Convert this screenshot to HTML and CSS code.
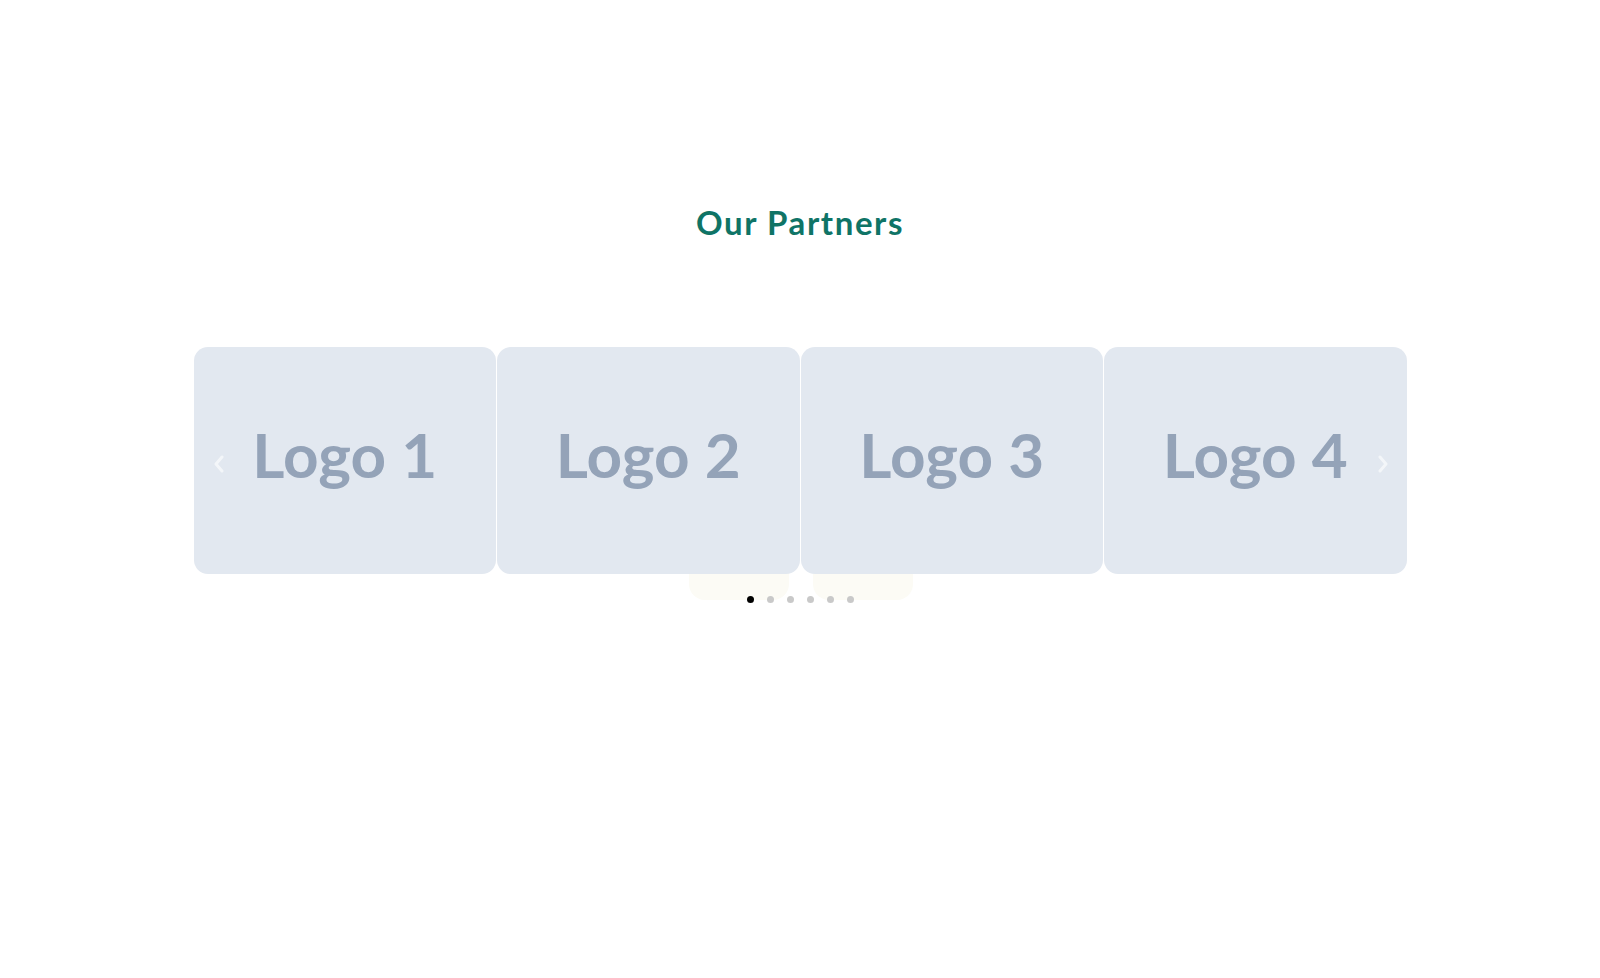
FILE: index.html
```html
<!DOCTYPE html>
<html lang="en">
<head>
  <meta charset="UTF-8">
  <title>Our Partners</title>
  <link rel="stylesheet" href="styles.css">
</head>
<body>

  <section class="partners">
    <h2 class="partners-title">Our Partners</h2>

    <div class="slider">
      <div class="slider-tabs">
        <span class="tab"></span>
        <span class="tab"></span>
      </div>

      <div class="slider-track">
        <div class="slide"><span>Logo 1</span></div>
        <div class="slide"><span>Logo 2</span></div>
        <div class="slide"><span>Logo 3</span></div>
        <div class="slide"><span>Logo 4</span></div>
      </div>

      <button class="slider-arrow prev" type="button" aria-label="Previous">
        <svg viewBox="0 0 10 20" width="10" height="20"><path d="M8 3 L2 10 L8 17" /></svg>
      </button>
      <button class="slider-arrow next" type="button" aria-label="Next">
        <svg viewBox="0 0 10 20" width="10" height="20"><path d="M2 3 L8 10 L2 17" /></svg>
      </button>

      <div class="slider-dots">
        <span class="dot active"></span>
        <span class="dot"></span>
        <span class="dot"></span>
        <span class="dot"></span>
        <span class="dot"></span>
        <span class="dot"></span>
      </div>
    </div>
  </section>

</body>
</html>
```

FILE: styles.css
```css
body {
  margin: 0;
  background: #ffffff;
  font-family: 'Lato', sans-serif;
}

.partners {
  padding-top: 199px;
}

.partners-title {
  margin: 0;
  text-align: center;
  font-family: 'Lato', sans-serif;
  font-size: 33px;
  font-weight: 700;
  letter-spacing: 1.6px;
  line-height: 46px;
  color: #0f7466;
}

.slider {
  position: relative;
  width: 1213px;
  margin: 102px auto 0;
}

.slider-track {
  position: relative;
  display: flex;
  gap: 1px;
  z-index: 1;
}

.slide {
  flex: 1;
  height: 227px;
  border-radius: 14px;
  background: #e2e8f0;
  display: flex;
  align-items: center;
  justify-content: center;
}

.slide span {
  font-size: 62px;
  font-weight: 700;
  color: #94a3b8;
  margin-top: -14px;
}

/* faint tabs peeking out below the slides */
.slider-tabs {
  position: absolute;
  left: 495px;
  top: 190px;
  display: flex;
  gap: 24px;
}

.tab {
  width: 100px;
  height: 63px;
  border-radius: 16px;
  background: #fcfbf5;
}

.slider-arrow {
  position: absolute;
  top: 107px;
  z-index: 2;
  padding: 0;
  border: none;
  background: transparent;
  cursor: pointer;
}

.slider-arrow svg path {
  fill: none;
  stroke: rgba(255, 255, 255, 0.6);
  stroke-width: 3;
  stroke-linecap: round;
  stroke-linejoin: round;
}

.slider-arrow.prev {
  left: 20px;
}

.slider-arrow.next {
  right: 19px;
}

.slider-dots {
  display: flex;
  justify-content: center;
  gap: 13px;
  margin-top: 22px;
  position: relative;
  z-index: 1;
}

.dot {
  width: 7px;
  height: 7px;
  border-radius: 50%;
  background: #c9c9c9;
}

.dot.active {
  background: #000000;
}
```
